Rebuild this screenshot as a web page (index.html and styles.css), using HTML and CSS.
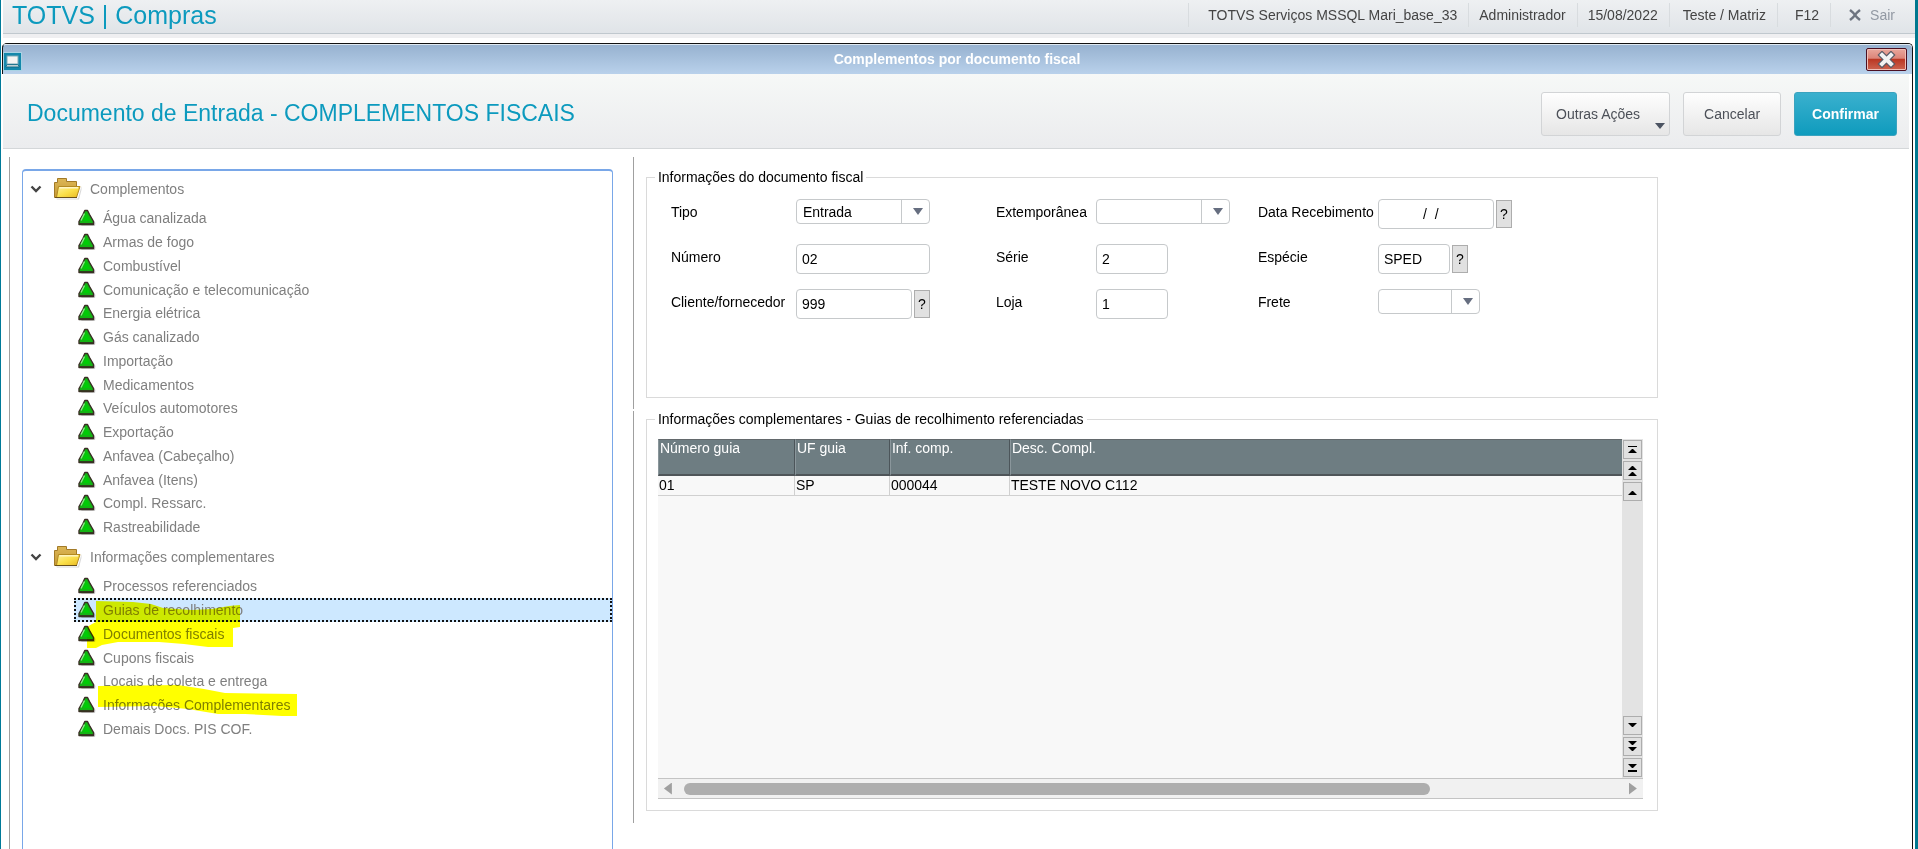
FILE: index.html
```html
<!DOCTYPE html>
<html lang="pt-BR">
<head>
    <meta charset="UTF-8">
    <meta name="viewport" content="width=device-width, initial-scale=1.0">
    <title>TOTVS | Compras</title>
    <link rel="stylesheet" href="styles.css">
</head>
<body>

    <!-- Shared icons -->
    <svg class="icon-defs" width="0" height="0" aria-hidden="true">
        <defs>
            <linearGradient id="folder-back" x1="0" y1="0" x2="0" y2="1">
                <stop offset="0" stop-color="#dcb655"/>
                <stop offset="1" stop-color="#c69a36"/>
            </linearGradient>
            <linearGradient id="folder-front" x1="0" y1="0" x2="1" y2="1">
                <stop offset="0" stop-color="#fdf0a0"/>
                <stop offset="0.5" stop-color="#fbe04a"/>
                <stop offset="1" stop-color="#e8b820"/>
            </linearGradient>
            <symbol id="chevron" viewBox="0 0 12 12">
                <path d="M1.5 3.5 L6 8 L10.5 3.5" fill="none" stroke="#444" stroke-width="2.4"/>
            </symbol>
            <symbol id="folder" viewBox="0 0 28 22">
                <path d="M2 20.5 H24 L27.5 8 L27.5 12 L25 21.5 H3Z" fill="#000" opacity="0.15"/>
                <path d="M0.5 19.5 V4.5 H3.5 V0.5 H12.5 V3.5 H22.5 V19.5Z" fill="url(#folder-back)" stroke="#a27a28"/>
                <path d="M4.5 8.5 H26 L22.5 19.5 H2.5Z" fill="url(#folder-front)" stroke="#b48a20"/>
                <path d="M5.5 9.8 H24" stroke="#fff6c4" stroke-width="1.4"/>
                <path d="M1 19.5 H23" stroke="#6a5018"/>
            </symbol>
            <symbol id="triangle" viewBox="0 0 18 18">
                <path d="M3 17 H17 L17.5 14 L11 4Z" fill="#000" opacity="0.18"/>
                <path d="M6.8 1.5 H9.5 L11.5 5.5 L15.5 12.5 V15.5 H1 V12.5 L5 5.5Z" fill="#14b414" stroke="#3a2c24" stroke-width="1.4" stroke-linejoin="round"/>
                <path d="M6.5 4.5 L3 11.5" stroke="#8cf08c" stroke-width="1.4"/>
                <path d="M8 4 L12 12 H5Z" fill="#00cc06"/>
                <path d="M1.5 14.7 H15" stroke="#333c20" stroke-width="1.4"/>
            </symbol>
        </defs>
    </svg>

    <!-- Top bar -->
    <header class="topbar">
        <h1>TOTVS | Compras</h1>
        <ul class="session">
            <li class="environment">TOTVS Serviços MSSQL Mari_base_33</li>
            <li>Administrador</li>
            <li>15/08/2022</li>
            <li class="wide">Teste / Matriz</li>
            <li class="shortcut">F12</li>
            <li class="exit">
                <a href="#">
                    <svg width="12" height="12" viewBox="0 0 12 12" aria-hidden="true">
                        <path d="M1 1 L4 3.5 L6 6 L8 3.5 L11 1 M1 11 L4 8.5 L6 6 L8 8.5 L11 11" fill="none" stroke="#6d7480" stroke-width="2.4"/>
                    </svg>
                    Sair
                </a>
            </li>
        </ul>
    </header>

    <!-- Window -->
    <main class="window">
        <div class="titlebar">
            <svg class="window-icon" width="19" height="19" viewBox="0 0 19 19" aria-hidden="true">
                <rect x="0.5" y="0.5" width="18" height="18" fill="#1488ab" stroke="#a9d3e4"/>
                <rect x="4" y="4" width="11" height="8" fill="#f4f4f2" stroke="#7ba9b8"/>
                <path d="M3 14 L4.5 12.5 H14.5 L16 14 V15 H3Z" fill="#bcd0d4" stroke="#0b6680" stroke-width="0.8"/>
            </svg>
            <h2>Complementos por documento fiscal</h2>
            <button class="close" type="button" aria-label="Fechar">
                <svg width="19" height="17" viewBox="0 0 19 17" aria-hidden="true">
                    <path d="M5 4 L14 13 M14 4 L5 13" stroke="#5a5a66" stroke-width="6.4" stroke-linecap="square"/>
                    <path d="M5 4 L14 13 M14 4 L5 13" stroke="#f2f2f2" stroke-width="4" stroke-linecap="square"/>
                </svg>
            </button>
        </div>

        <div class="toolbar">
            <h3>Documento de Entrada - COMPLEMENTOS FISCAIS</h3>
            <button class="btn btn-menu" type="button">Outras Ações</button>
            <button class="btn" type="button">Cancelar</button>
            <button class="btn btn-primary" type="button">Confirmar</button>
        </div>

        <div class="content">
            <!-- Tree -->
            <nav class="tree-pane" aria-label="Complementos">
                <div class="tree">
                    <div class="folder">
                        <svg class="chevron"><use href="#chevron"/></svg>
                        <svg class="folder-icon"><use href="#folder"/></svg>
                        Complementos
                    </div>
                    <ul class="items">
                        <li><svg><use href="#triangle"/></svg><a href="#">Água canalizada</a></li>
                        <li><svg><use href="#triangle"/></svg><a href="#">Armas de fogo</a></li>
                        <li><svg><use href="#triangle"/></svg><a href="#">Combustível</a></li>
                        <li><svg><use href="#triangle"/></svg><a href="#">Comunicação e telecomunicação</a></li>
                        <li><svg><use href="#triangle"/></svg><a href="#">Energia elétrica</a></li>
                        <li><svg><use href="#triangle"/></svg><a href="#">Gás canalizado</a></li>
                        <li><svg><use href="#triangle"/></svg><a href="#">Importação</a></li>
                        <li><svg><use href="#triangle"/></svg><a href="#">Medicamentos</a></li>
                        <li><svg><use href="#triangle"/></svg><a href="#">Veículos automotores</a></li>
                        <li><svg><use href="#triangle"/></svg><a href="#">Exportação</a></li>
                        <li><svg><use href="#triangle"/></svg><a href="#">Anfavea (Cabeçalho)</a></li>
                        <li><svg><use href="#triangle"/></svg><a href="#">Anfavea (Itens)</a></li>
                        <li><svg><use href="#triangle"/></svg><a href="#">Compl. Ressarc.</a></li>
                        <li><svg><use href="#triangle"/></svg><a href="#">Rastreabilidade</a></li>
                    </ul>
                    <div class="folder">
                        <svg class="chevron"><use href="#chevron"/></svg>
                        <svg class="folder-icon"><use href="#folder"/></svg>
                        Informações complementares
                    </div>
                    <ul class="items">
                        <li><svg><use href="#triangle"/></svg><a href="#">Processos referenciados</a></li>
                        <li class="selected"><svg><use href="#triangle"/></svg><a href="#">Guias de recolhimento</a></li>
                        <li><svg><use href="#triangle"/></svg><a href="#">Documentos fiscais</a></li>
                        <li><svg><use href="#triangle"/></svg><a href="#">Cupons fiscais</a></li>
                        <li><svg><use href="#triangle"/></svg><a href="#">Locais de coleta e entrega</a></li>
                        <li><svg><use href="#triangle"/></svg><a href="#">Informações Complementares</a></li>
                        <li class="marks">
                            <svg><use href="#triangle"/></svg><a href="#">Demais Docs. PIS COF.</a>
                            <!-- Highlighter strokes -->
                            <svg class="marker" viewBox="84 598 220 120" aria-hidden="true">
                                <path fill="#ff0" d="M96 601 L133 602 L151 604 L163 608 L192 610 L212 609 L229 606 L240 605 V627 L233 628 V647 H208 L184 644 L159 642 H118 L102 645 L96 648 H87 V627 L92 624 L96 622Z"/>
                                <path fill="#ff0" d="M98 686 L178 685 L204 689 L225 693 L297 694 V716 H282 L245 714 H218 L188 709 L155 706 L98 707Z"/>
                            </svg>
                        </li>
                    </ul>
                </div>
            </nav>

            <div class="main-pane">
                <section class="pane pane-form">
                    <fieldset class="form-group">
                        <legend>Informações do documento fiscal</legend>
                        <div class="form-grid">
                            <label for="tipo">Tipo</label>
                            <div class="select-box"><select id="tipo"><option>Entrada</option><option>Saída</option></select></div>
                            <label for="extemporanea">Extemporânea</label>
                            <div class="select-box"><select id="extemporanea"><option></option></select></div>
                            <label for="data">Data Recebimento</label>
                            <div class="field"><input class="date" type="text" id="data" value="/  /"><button class="lookup" type="button" aria-label="Pesquisar data">?</button></div>

                            <label for="numero">Número</label>
                            <div class="field"><input class="large" type="text" id="numero" value="02"></div>
                            <label for="serie">Série</label>
                            <div class="field"><input type="text" id="serie" value="2"></div>
                            <label for="especie">Espécie</label>
                            <div class="field"><input type="text" id="especie" value="SPED"><button class="lookup" type="button" aria-label="Pesquisar espécie">?</button></div>

                            <label for="cliente">Cliente/fornecedor</label>
                            <div class="field"><input class="medium" type="text" id="cliente" value="999"><button class="lookup" type="button" aria-label="Pesquisar cliente">?</button></div>
                            <label for="loja">Loja</label>
                            <div class="field"><input type="text" id="loja" value="1"></div>
                            <label for="frete">Frete</label>
                            <div class="select-box small"><select id="frete"><option></option></select></div>
                        </div>
                    </fieldset>
                </section>

                <section class="pane pane-grid">
                    <fieldset class="grid-group">
                        <legend>Informações complementares - Guias de recolhimento referenciadas</legend>
                        <div class="grid-area">
                            <div class="grid-body">
                                <table>
                                    <thead>
                                        <tr>
                                            <th class="col-guia">Número guia</th>
                                            <th class="col-uf">UF guia</th>
                                            <th class="col-inf">Inf. comp.</th>
                                            <th>Desc. Compl.</th>
                                        </tr>
                                    </thead>
                                    <tbody>
                                        <tr>
                                            <td>01</td>
                                            <td>SP</td>
                                            <td>000044</td>
                                            <td>TESTE NOVO C112</td>
                                        </tr>
                                    </tbody>
                                </table>
                            </div>
                            <div class="vscroll">
                                <button type="button" aria-label="Primeiro"><svg viewBox="0 0 9 9"><path d="M0 8 H9 L5 4 H4Z"/><path class="line" d="M0 1.5 H9"/></svg></button>
                                <button type="button" aria-label="Página anterior"><svg viewBox="0 0 9 11"><path d="M0 5 L4 1 H5 L9 5Z M0 11 L4 7 H5 L9 11Z"/></svg></button>
                                <button type="button" aria-label="Anterior"><svg viewBox="0 0 9 9"><path d="M0 8 L4 4 H5 L9 8Z"/></svg></button>
                                <button class="first-down" type="button" aria-label="Próximo"><svg viewBox="0 0 9 9"><path d="M0 2 L4 6 H5 L9 2Z"/></svg></button>
                                <button type="button" aria-label="Próxima página"><svg viewBox="0 0 9 11"><path d="M0 0 L4 4 H5 L9 0Z M0 6 L4 10 H5 L9 6Z"/></svg></button>
                                <button type="button" aria-label="Último"><svg viewBox="0 0 9 9"><path d="M0 1 L4 5 H5 L9 1Z"/><path d="M0 7 H9 V9 H0Z"/></svg></button>
                            </div>
                        </div>
                        <div class="hscroll">
                            <button class="left" type="button" aria-label="Rolar para a esquerda"></button>
                            <div class="track"><div class="thumb"></div></div>
                            <button class="right" type="button" aria-label="Rolar para a direita"></button>
                        </div>
                    </fieldset>
                </section>
            </div>
        </div>
    </main>

</body>
</html>
```

FILE: styles.css
```css
* {
    box-sizing: border-box;
}

body {
    display: flex;
    flex-direction: column;
    height: 100vh;
    margin: 0;
    overflow: hidden;
    border-left: 1px solid #007a99;
    border-right: 3px solid #00788f;
    background-color: #fff;
    color: #000;
    font-family: Arial, "Liberation Sans", sans-serif;
    font-size: 14px;
    line-height: 16px;
}

h1,
h2,
h3,
ul {
    margin: 0;
    padding: 0;
}

ul {
    list-style: none;
}

a {
    color: inherit;
    text-decoration: none;
}

button,
input,
select {
    margin: 0;
    font-family: inherit;
    font-size: 14px;
    color: inherit;
}

.icon-defs {
    position: absolute;
}

/* Top bar */
.topbar {
    display: flex;
    flex: none;
    justify-content: space-between;
    height: 34px;
    margin-left: 2px;
    border-bottom: 1px solid #c0c8ce;
    background: linear-gradient(#eef0f2, #e0e4e8);
    box-shadow: 0 4px 0 #efeff1;
}

.topbar h1 {
    padding-left: 9px;
    color: #0c9abe;
    font-size: 25px;
    font-weight: normal;
    line-height: 30px;
}

.session {
    display: flex;
    align-items: flex-start;
    color: #444;
}

.session li {
    height: 24px;
    margin-top: 3px;
    padding: 0 11px 0 10px;
    border-left: 1px solid #d8dcdf;
    line-height: 24px;
}

.session .environment {
    padding-left: 19px;
}

.session .wide {
    padding-left: 13px;
}

.session .shortcut {
    padding-left: 17px;
}

.session .exit {
    padding: 0 20px 0 18px;
    color: #9299a3;
}

.exit a {
    display: flex;
    align-items: center;
    gap: 9px;
}

/* Window frame */
.window {
    display: flex;
    flex: 1;
    flex-direction: column;
    min-height: 0;
    margin: 9px 2px 0 1px;
    border-top: 1px solid #111;
    border-right: 1px solid #111;
    border-radius: 5px 5px 0 0;
}

.titlebar {
    display: flex;
    flex: none;
    align-items: center;
    height: 30px;
    border-left: 1px solid #111;
    border-top: 1px solid #dfe9f2;
    border-radius: 4px 4px 0 0;
    background: linear-gradient(#97b2d0, #b9d1eb);
}

.window-icon {
    margin-top: 4px;
}

.titlebar h2 {
    flex: 1;
    padding: 0 0 2px 26px;
    color: #fff;
    font-size: 14px;
    line-height: 26px;
    text-align: center;
}

.close {
    display: flex;
    align-items: center;
    justify-content: center;
    width: 41px;
    height: 23px;
    margin-right: 5px;
    padding: 0;
    border: 1px solid #4c1022;
    border-radius: 2px;
    background: linear-gradient(#e9a79c, #dc8478 45%, #b93420 46%, #cc6450);
    box-shadow: inset 0 0 0 1px #f0c0b8;
}

/* Page heading with its buttons */
.toolbar {
    display: flex;
    flex: none;
    align-items: center;
    gap: 13px;
    height: 75px;
    margin: 0 3px 0 1px;
    padding: 5px 12px 0 24px;
    border-bottom: 1px solid #d4d7d9;
    background: linear-gradient(#f6f8f7, #ebecee);
}

.toolbar h3 {
    flex: 1;
    padding-bottom: 2px;
    color: #0c9abe;
    font-size: 23px;
    font-weight: normal;
    line-height: 28px;
}

.btn {
    height: 44px;
    padding: 0 20px;
    border: 1px solid #d2d4d6;
    border-radius: 3px;
    background: linear-gradient(#fefefe, #e6e6e6);
    color: #4c5058;
}

.btn-menu {
    position: relative;
    width: 129px;
    padding: 0 14px;
    text-align: left;
}

.btn-menu::after {
    position: absolute;
    right: 4px;
    bottom: 6px;
    border: 5px solid transparent;
    border-top: 6px solid #4c5462;
    border-bottom: 0;
    content: "";
}

.btn-primary {
    padding: 0 17px;
    border-color: #3aa3bf;
    background: linear-gradient(#3ab0ce, #0f9bbd);
    color: #fff;
    font-weight: bold;
}

/* Two panes below the heading */
.content {
    display: grid;
    flex: 1;
    grid-template-columns: 22fr 45fr;
    min-height: 0;
    margin: 8px 3px 0 7px;
}

.tree-pane {
    display: flex;
    padding: 12px 20px 0 12px;
    border-left: 1px solid #a0a0a0;
}

.tree {
    flex: 1;
    overflow: hidden;
    border: 1px solid #79a7e8;
    border-top-width: 2px;
    border-bottom: 0;
    border-radius: 4px 4px 0 0;
    color: #7f7f7f;
}

.folder {
    display: flex;
    align-items: center;
    height: 35px;
    padding-left: 7px;
}

.chevron {
    width: 12px;
    height: 12px;
    margin-right: 12px;
}

.folder-icon {
    width: 28px;
    height: 22px;
    margin-right: 8px;
}

.items li {
    display: flex;
    align-items: center;
    gap: 7px;
    height: 24px;
    margin-left: 51px;
    padding-left: 4px;
}

.items li:nth-child(4n) {
    height: 23px;
}

.items svg {
    flex: none;
    width: 18px;
    height: 18px;
}

.items .selected {
    background-color: #cde8ff;
    outline: 2px dotted #111;
    outline-offset: -2px;
}

.marks {
    position: relative;
}

.items .marker {
    position: absolute;
    bottom: 23px;
    left: 10px;
    width: 220px;
    height: 120px;
    mix-blend-mode: multiply;
    pointer-events: none;
}

/* Form and grid panes */
.pane {
    padding-left: 12px;
    border-left: 1px solid #a0a0a0;
}

.pane-form {
    height: 252px;
    padding-top: 12px;
}

.pane-grid {
    height: 412px;
    margin-top: 2px;
}

fieldset {
    max-width: 1012px;
    margin: 0;
    border: 1px solid #dadada;
}

legend {
    padding: 0 3px;
}

.form-group {
    height: 229px;
    padding: 14px 24px;
}

.form-group legend {
    margin-left: -16px;
}

.form-grid {
    display: grid;
    grid-template-columns: 125px 200px 100px 162px 120px 1fr;
    grid-auto-rows: 45px;
    align-items: start;
}

.form-grid label {
    line-height: 26px;
}

.field {
    display: flex;
    align-items: center;
    gap: 2px;
}

.field input {
    width: 72px;
    height: 30px;
    padding: 0 5px;
    border: 1px solid #c6c9cb;
    border-radius: 4px;
    background-color: #fff;
}

.field .large {
    width: 134px;
}

.field .medium {
    width: 116px;
}

.field .date {
    width: 116px;
    padding-right: 15px;
    text-align: center;
    white-space: pre;
}

.lookup {
    width: 16px;
    height: 28px;
    padding: 0;
    border: 1px solid #adadad;
    background-color: #e1e1e1;
}

.select-box {
    position: relative;
    width: 134px;
}

.select-box.small {
    width: 102px;
}

.select-box select {
    display: block;
    width: 100%;
    height: 25px;
    padding: 0 30px 0 6px;
    border: 1px solid #c6c9cb;
    border-radius: 4px;
    background-color: #fff;
    appearance: none;
}

.select-box::before {
    position: absolute;
    top: 1px;
    right: 28px;
    width: 1px;
    height: 23px;
    background-color: #c6c9cb;
    content: "";
}

.select-box::after {
    position: absolute;
    top: 9px;
    right: 7px;
    border: 5px solid transparent;
    border-top: 7px solid #666e80;
    border-bottom: 0;
    content: "";
    pointer-events: none;
}

/* Data grid */
.grid-group {
    height: 400px;
    padding: 12px 14px 0 11px;
}

.grid-group legend {
    margin-left: -3px;
}

.grid-area {
    display: flex;
    height: 339px;
}

.grid-body {
    flex: 1;
    background-color: #f8f8f8;
}

table {
    width: 100%;
    border-collapse: separate;
    border-spacing: 0;
    table-layout: fixed;
}

th {
    height: 37px;
    padding: 0 1px;
    border-top: 1px solid #63696c;
    border-right: 1px solid #4c555a;
    border-bottom: 2px solid #4f5559;
    border-left: 1px solid #8a969b;
    background-color: #6e7d82;
    color: #fff;
    font-weight: normal;
    text-align: left;
    vertical-align: top;
}

td {
    height: 20px;
    padding: 0 1px 2px;
    border-right: 1px solid #d0d0d0;
    border-bottom: 1px solid #d0d0d0;
}

th:last-child,
td:last-child {
    border-right: 0;
}

.col-guia {
    width: 137px;
}

.col-uf {
    width: 95px;
}

.col-inf {
    width: 120px;
}

.vscroll {
    display: flex;
    flex-direction: column;
    gap: 2px;
    width: 21px;
    padding: 1px;
    background-color: #e3e3e3;
}

.vscroll button {
    display: flex;
    align-items: center;
    justify-content: center;
    height: 19px;
    padding: 0;
    border: 1px solid #adadad;
    background-color: #e1e1e1;
}

.vscroll .first-down {
    margin-top: auto;
}

.vscroll svg {
    width: 9px;
    height: 11px;
}

.vscroll .line {
    stroke: #000;
}

.hscroll {
    display: flex;
    align-items: center;
    height: 21px;
    padding: 0 6px;
    border-top: 1px solid #c4c4c4;
    border-bottom: 1px solid #c4c4c4;
    background-color: #f1f1f1;
}

.hscroll button {
    width: 8px;
    height: 12px;
    padding: 0;
    border: 0;
    background-color: #a0a0a0;
}

.hscroll .left {
    clip-path: polygon(100% 0, 100% 100%, 0 50%);
}

.hscroll .right {
    clip-path: polygon(0 0, 100% 50%, 0 100%);
}

.track {
    flex: 1;
    padding: 0 12px;
}

.thumb {
    width: 80%;
    height: 12px;
    border-radius: 6px;
    background-color: #aeaeae;
}
```
